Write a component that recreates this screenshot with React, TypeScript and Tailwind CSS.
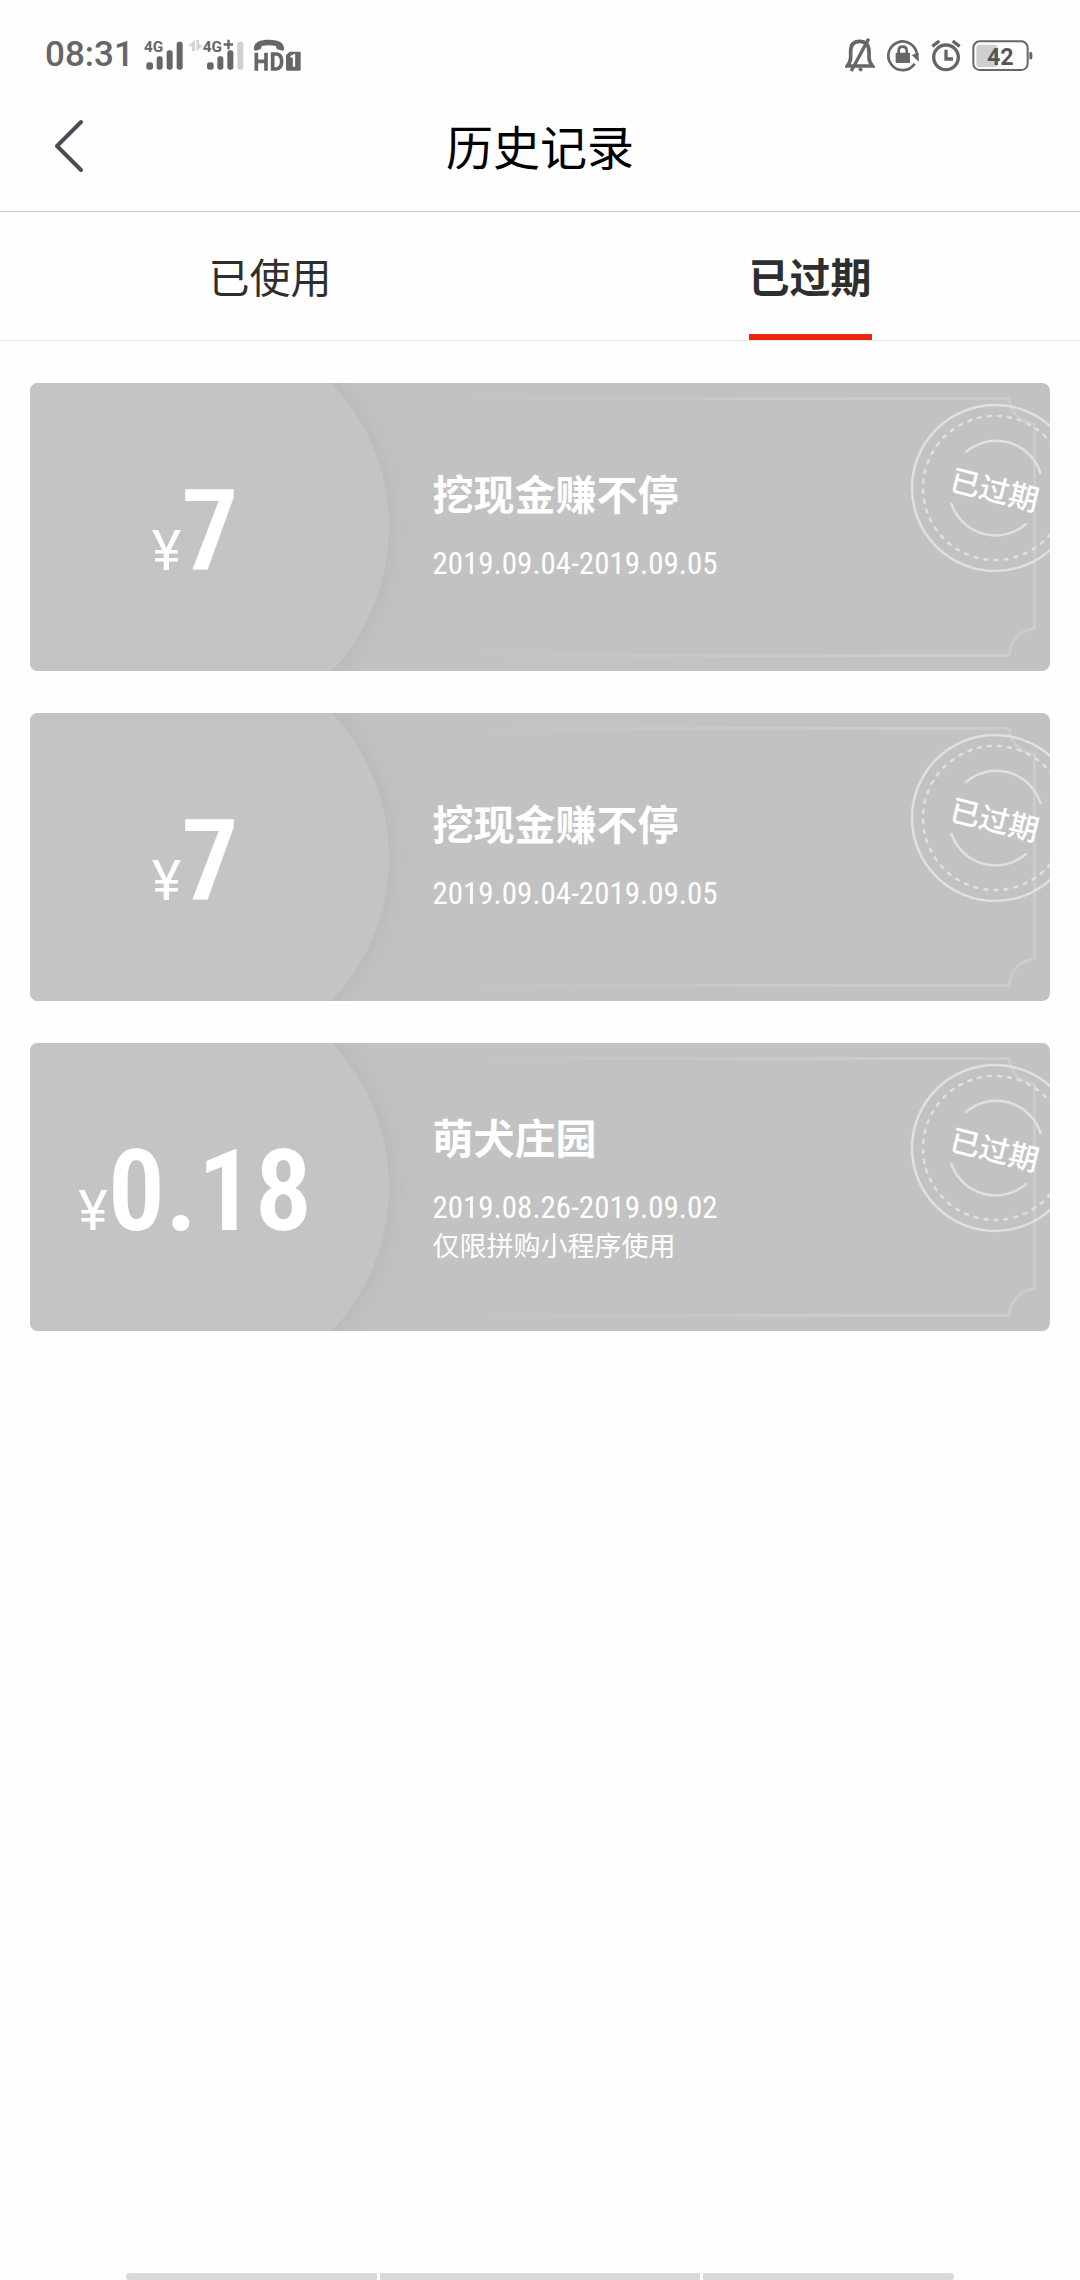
import React from "react";

interface Coupon {
  id: number;
  amount: string;
  title: string;
  period: string;
  note?: string;
}

const coupons: Coupon[] = [
  { id: 1, amount: "7", title: "挖现金赚不停", period: "2019.09.04-2019.09.05" },
  { id: 2, amount: "7", title: "挖现金赚不停", period: "2019.09.04-2019.09.05" },
  { id: 3, amount: "0.18", title: "萌犬庄园", period: "2019.08.26-2019.09.02", note: "仅限拼购小程序使用" },
];

const tabs = [
  { id: "used", label: "已使用" },
  { id: "expired", label: "已过期" },
];

function StatusBar() {
  return (
    <div className="flex h-20 items-center justify-between pl-[45px] pr-[47px] pt-[30px] text-[#666] fill-[#666]">
      <div className="flex items-center">
        <span className="font-['Roboto',sans-serif] text-[35px] leading-8 font-medium">08:31</span>
        {/* SIM 1 signal */}
        <svg viewBox="340 55 120 96" className="ml-[10px] h-8 w-10" aria-hidden="true">
          <text x="340" y="95" fontSize="46" className="font-['Roboto',sans-serif] font-bold">4G</text>
          <rect x="347" y="125" width="20" height="22" rx="8" />
          <rect x="378" y="107" width="18" height="40" rx="7" />
          <rect x="408" y="89" width="18" height="58" rx="7" />
          <rect x="438" y="63" width="18" height="84" rx="7" />
        </svg>
        {/* SIM 2 signal */}
        <svg viewBox="470 55 171 96" className="ml-1 h-8 w-[57px]" aria-hidden="true">
          <path d="M491 57V91H482V77H470ZM495 91V57H503V70L514 76Z" fill="#d4d4d4" />
          <text x="514" y="93" fontSize="46" className="font-['Roboto',sans-serif] font-bold">4G</text>
          <path d="M588 57h7v11h10v7h-10v11h-7v-11h-11v-7h11z" />
          <rect x="527" y="125" width="20" height="22" rx="8" />
          <rect x="558" y="107" width="18" height="40" rx="7" />
          <rect x="588" y="89" width="18" height="58" rx="7" />
          <rect x="618" y="63" width="18" height="84" rx="7" fill="#d0d0d0" />
        </svg>
        {/* HD call */}
        <svg viewBox="664 55 144 96" className="ml-2 h-8 w-12" aria-hidden="true">
          <path d="M667 86C665 66 682 57 711 57S759 66 757 86Q757 90 752 90L737 86Q733 84 733 76Q711 71 690 76Q690 84 686 86L672 90Q667 90 667 86Z" />
          <path d="M674 96V150M703 96V150M674 122H703M723 100H733Q750 100 750 122T733 145H723Z" fill="none" stroke="currentColor" strokeWidth="11" />
          <path d="M774 93H803Q807 93 807 97V146Q807 150 803 150H767Q763 150 763 146V104Z" />
          <path d="M777 109L787 104V138" fill="none" stroke="#fff" strokeWidth="7" />
        </svg>
      </div>

      <div className="flex items-center gap-[11px]">
        {/* muted bell */}
        <svg viewBox="75 52 90 102" className="h-[34px] w-[30px]" fill="none" stroke="currentColor" strokeWidth="10" aria-hidden="true">
          <path d="M82 136Q92 124 92 110V92Q92 62 119 62T147 92V110Q147 124 157 136Z" strokeWidth="11" />
          <path d="M146 54L94 151" />
          <path d="M124 142L119 150" strokeWidth="11" />
        </svg>
        {/* rotation lock */}
        <svg viewBox="199 52 102 102" className="h-[34px] w-[34px]" aria-hidden="true">
          <path d="M292 103A43 43 0 1 0 285 129" fill="none" stroke="currentColor" strokeWidth="8" />
          <path d="M276 103L297 96V123Z" />
          <rect x="228" y="96" width="43" height="31" rx="3" />
          <path d="M237 98V90Q237 78 249 78T261 90V98" fill="none" stroke="currentColor" strokeWidth="8" />
        </svg>
        {/* alarm */}
        <svg viewBox="330 52 90 102" className="h-[34px] w-[30px]" fill="none" stroke="currentColor" strokeWidth="10" aria-hidden="true">
          <circle cx="375" cy="110" r="37" />
          <path d="M375 87V115H396" />
          <path d="M334 77L355 61M395 61L416 77" />
        </svg>
        {/* battery */}
        <svg viewBox="455 52 183 102" className="h-[34px] w-[61px]" aria-label="42%">
          <rect x="468" y="72" width="64" height="67" rx="9" fill="#d0d0d0" />
          <rect x="459" y="62" width="163" height="86" rx="19" fill="none" stroke="currentColor" strokeWidth="6" />
          <path d="M627 94H631Q636 94 636 99V111Q636 116 631 116H627Z" />
          <text x="540" y="132" fontSize="70" textAnchor="middle" className="font-['Roboto',sans-serif] font-bold" fill="#555">42</text>
        </svg>
      </div>
    </div>
  );
}

function ExpiredStamp() {
  return (
    <div className="absolute right-[-30px] top-5 flex size-[170px] items-center justify-center">
      <svg viewBox="0 0 170 170" className="absolute inset-0 size-full" fill="none" stroke="#e0e0e0" strokeWidth="2.5" strokeLinecap="round" aria-hidden="true">
        <circle cx="85" cy="85" r="83" />
        <circle cx="85" cy="85" r="72" strokeDasharray="3 7.05" />
        <path d="M56 49A46.5 46.5 0 0 1 130.500 70" />
        <path d="M41.500 101A46.500 46.500 0 0 0 116 121" />
      </svg>
      <span className="relative rotate-[14deg] text-[30px] leading-none font-medium whitespace-nowrap">已过期</span>
    </div>
  );
}

function CouponCard({ coupon }: { coupon: Coupon }) {
  return (
    <li className="relative flex min-h-72 overflow-hidden rounded-lg bg-[#c2c2c2] text-white">
      {/* left disc with its soft shadow */}
      <div className="absolute top-1/2 -left-[61px] size-[420px] -translate-y-1/2 rounded-full bg-[#c4c4c4] shadow-[4px_0_18px_4px_#bababa]" />
      {/* ticket outline */}
      <svg viewBox="0 0 620 288" className="absolute inset-y-0 right-0 h-full w-[620px]" fill="none" aria-hidden="true">
        <defs>
          <linearGradient id={`fade-${coupon.id}`} gradientUnits="userSpaceOnUse" x1="20" y1="0" x2="460" y2="0">
            <stop offset="0" stopColor="#cccccc" stopOpacity="0" />
            <stop offset="1" stopColor="#cccccc" />
          </linearGradient>
        </defs>
        <path d="M20 15.500H579Q582 38 604.500 41V245.500Q582 249 579 272.500H20" stroke={`url(#fade-${coupon.id})`} strokeWidth="3" />
      </svg>

      <div className="relative flex w-[32%] items-center justify-center pl-1">
        <p className="flex items-baseline pt-2 font-['Roboto',sans-serif] leading-none">
          <span className="text-[56px]">¥</span>
          <span className="font-['Roboto_Condensed','Roboto',sans-serif] text-[114px] font-semibold">{coupon.amount}</span>
        </p>
      </div>
      <div className="relative ml-[76px] flex flex-col justify-center">
        <h2 className="mb-7 text-[41px] leading-[46px] font-bold">{coupon.title}</h2>
        <p className="font-['Roboto_Condensed','Roboto',sans-serif] text-[31px] leading-[42px]">{coupon.period}</p>
        {coupon.note && <p className="text-[27px] leading-8">{coupon.note}</p>}
      </div>
      <ExpiredStamp />
    </li>
  );
}

export default function App() {
  const [activeTab, setActiveTab] = React.useState("expired");

  return (
    <div className="flex min-h-screen flex-col bg-[#fefefe] font-['Noto_Sans_CJK_SC',sans-serif]">
      <StatusBar />

      <header className="relative flex h-33 items-center justify-center border-b border-[#c8c8c8]">
        <button type="button" aria-label="返回" className="absolute left-[50px] flex h-16 w-10 items-center">
          <svg viewBox="0 0 40 64" className="h-16 w-10" fill="none" stroke="#4a4d58" strokeWidth="4" strokeLinecap="round" strokeLinejoin="round">
            <path d="M31 8L7 32L31 56" />
          </svg>
        </button>
        <h1 className="pb-[2px] text-[47px] leading-none text-black">历史记录</h1>
      </header>

      <nav className="flex h-[129px] border-b border-[#e8e8e8]">
        {tabs.map((tab) => (
          <button
            key={tab.id}
            type="button"
            onClick={() => setActiveTab(tab.id)}
            className="flex flex-1 items-stretch justify-center text-[41px] text-[#2e2e2e]"
          >
            <span className={`flex items-center border-b-6 pt-1 leading-none ${activeTab === tab.id ? "border-[#f0250f] font-bold" : "border-transparent"}`}>
              {tab.label}
            </span>
          </button>
        ))}
      </nav>

      <main className="flex-1 px-[30px] pt-[42px]">
        <ul className="flex flex-col gap-[42px]">
          {coupons.map((coupon) => (
            <CouponCard key={coupon.id} coupon={coupon} />
          ))}
        </ul>
      </main>

      {/* gesture bar */}
      <div className="flex h-[7px] justify-center gap-[3px]">
        <div className="w-[251px] rounded-l-full bg-[#d9d9d9]" />
        <div className="w-80 bg-[#d9d9d9]" />
        <div className="w-[251px] rounded-r-full bg-[#d9d9d9]" />
      </div>
    </div>
  );
}
